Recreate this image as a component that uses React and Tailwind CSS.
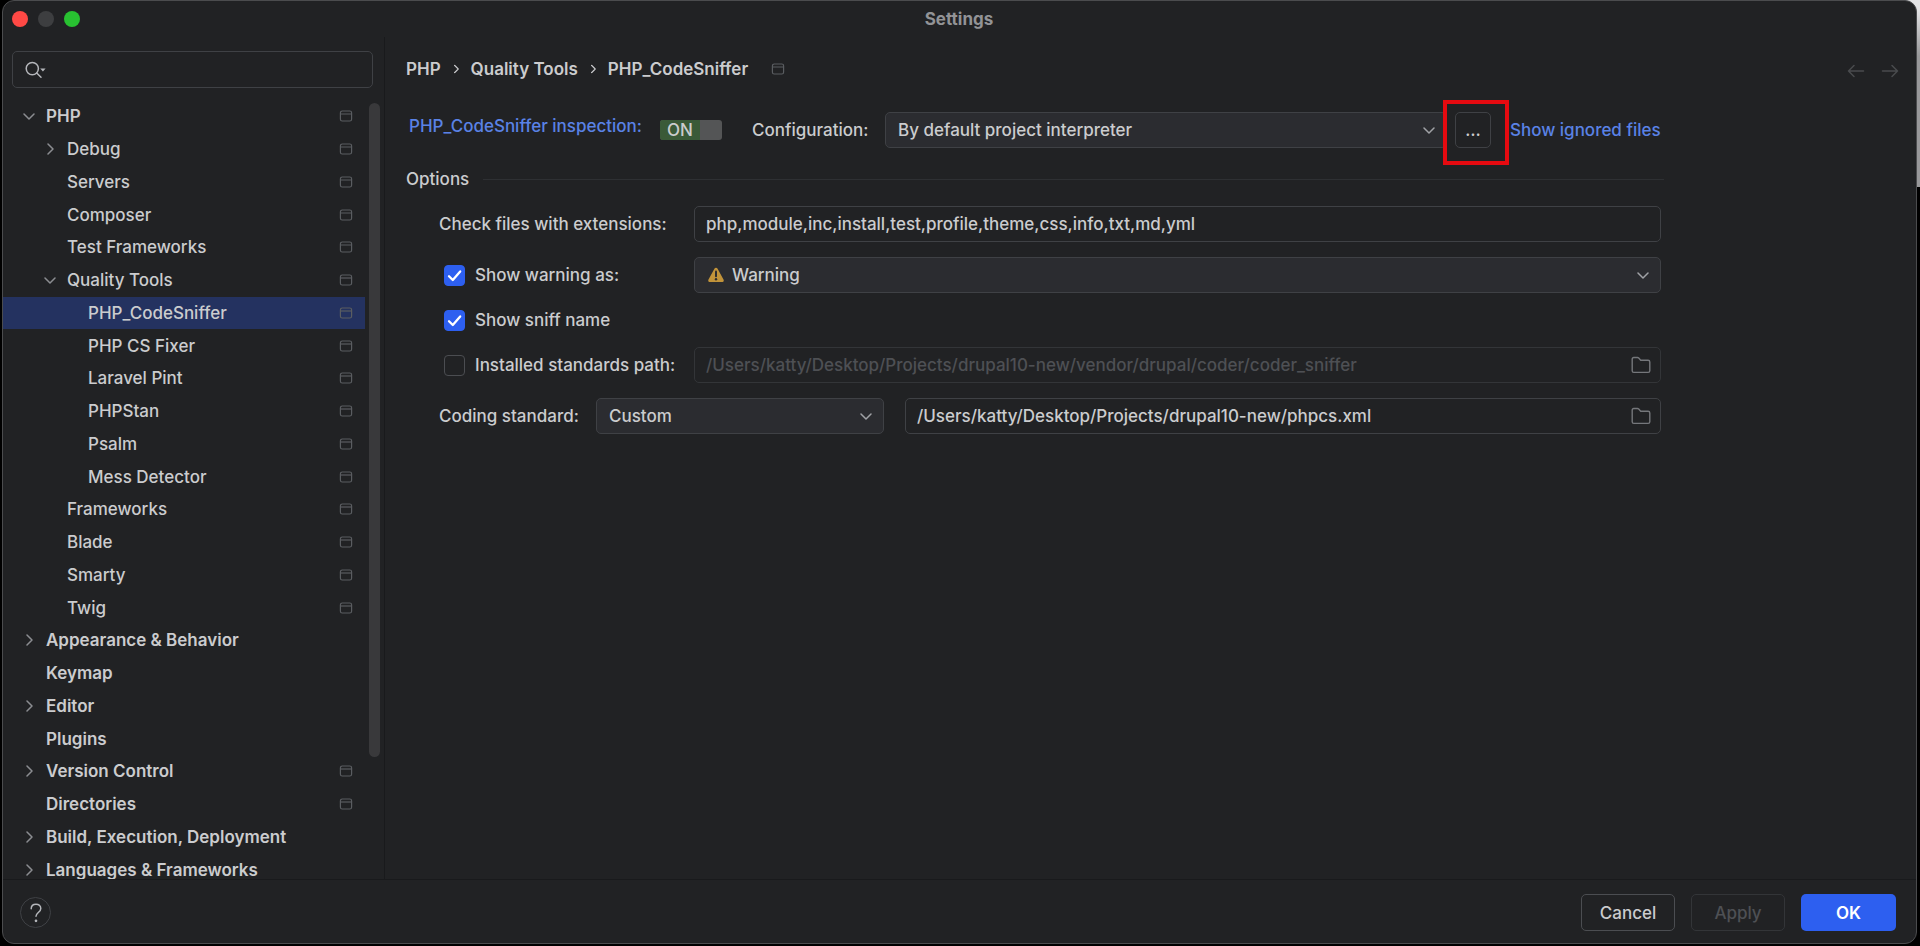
import { useState } from "react";

const TREE = [
  { label: "PHP", level: 0, arrow: "down", scope: true },
  { label: "Debug", level: 1, arrow: "right", scope: true },
  { label: "Servers", level: 1, scope: true },
  { label: "Composer", level: 1, scope: true },
  { label: "Test Frameworks", level: 1, scope: true },
  { label: "Quality Tools", level: 1, arrow: "down", scope: true },
  { label: "PHP_CodeSniffer", level: 2, scope: true },
  { label: "PHP CS Fixer", level: 2, scope: true },
  { label: "Laravel Pint", level: 2, scope: true },
  { label: "PHPStan", level: 2, scope: true },
  { label: "Psalm", level: 2, scope: true },
  { label: "Mess Detector", level: 2, scope: true },
  { label: "Frameworks", level: 1, scope: true },
  { label: "Blade", level: 1, scope: true },
  { label: "Smarty", level: 1, scope: true },
  { label: "Twig", level: 1, scope: true },
  { label: "Appearance & Behavior", level: 0, arrow: "right" },
  { label: "Keymap", level: 0 },
  { label: "Editor", level: 0, arrow: "right" },
  { label: "Plugins", level: 0 },
  { label: "Version Control", level: 0, arrow: "right", scope: true },
  { label: "Directories", level: 0, scope: true },
  { label: "Build, Execution, Deployment", level: 0, arrow: "right" },
  { label: "Languages & Frameworks", level: 0, arrow: "right" },
];

const INDENT = ["pl-5", "pl-[41px]", "pl-[62px]"];

function Chevron({ direction, className = "" }) {
  const d = direction === "right" ? "M4 1l5 5-5 5" : "M1 4l5 5 5-5";
  return (
    <svg viewBox="0 0 12 12" className={`size-3 shrink-0 ${className}`} fill="none" stroke="currentColor" strokeWidth="1.5" strokeLinecap="round" strokeLinejoin="round" aria-hidden="true">
      <path d={d} />
    </svg>
  );
}

function ScopeIcon() {
  return (
    <svg viewBox="0 0 14 12" className="h-3 w-3.5 shrink-0 text-[#5a5d61]" fill="none" stroke="currentColor" strokeWidth="1.2" aria-hidden="true">
      <rect x="1.4" y="1" width="11.2" height="10" rx="1.8" />
      <path d="M1.4 4h11.2" />
    </svg>
  );
}

function FolderIcon() {
  return (
    <svg viewBox="0 0 20 18" className="h-[18px] w-5" fill="none" stroke="currentColor" strokeWidth="1.4" strokeLinejoin="round" aria-hidden="true">
      <path d="M1.2 3.2c0-1 .6-1.700 1.600-1.700h3.700c.5 0 .9.2 1.200.5l2 2.200h7.400c1 0 1.700.7 1.700 1.700v8.800c0 1-.7 1.700-1.700 1.700H2.800c-1 0-1.600-.7-1.600-1.700z" />
    </svg>
  );
}

function Sidebar() {
  const [selected, setSelected] = useState("PHP_CodeSniffer");
  return (
    <aside className="flex w-[382px] shrink-0 flex-col border-r border-[#191a1c]">
      <div className="mt-3.5 mr-[11px] ml-[9px] flex h-[37px] shrink-0 items-center rounded-[5px] border border-[#3f4145] pl-3">
        <svg viewBox="0 0 21 18" className="h-[18px] w-[21px] shrink-0 text-[#b4b6ba]" fill="none" stroke="currentColor" strokeWidth="1.5" strokeLinecap="round" aria-hidden="true">
          <circle cx="7.3" cy="7.6" r="6.1" />
          <path d="M11.7 12l4.3 4.2" />
          <path d="M15.2 7.6h5.4l-2.7 2.8z" fill="currentColor" stroke="none" />
        </svg>
        <input aria-label="Search settings" className="h-full min-w-0 flex-1 bg-transparent px-2 outline-none" />
      </div>
      <div className="mt-3 flex min-h-0 flex-1 overflow-hidden">
        <ul role="tree" aria-label="Settings categories" className="mb-[-7px] flex min-w-0 flex-1 flex-col">
          {TREE.map((item) => (
            <li key={item.label} role="treeitem" aria-selected={item.label === selected} className="flex min-h-8 flex-1">
              <button
                type="button"
                onClick={() => setSelected(item.label)}
                className={`flex w-full items-center pr-3 text-left ${INDENT[item.level]} ${item.level === 0 ? "font-semibold" : ""} ${item.label === selected ? "bg-[#243260]" : ""}`}
              >
                <span className="mr-[11px] flex size-3 shrink-0 text-[#8b8d91]">{item.arrow && <Chevron direction={item.arrow} />}</span>
                <span className="flex-1 truncate">{item.label}</span>
                {item.scope && <ScopeIcon />}
              </button>
            </li>
          ))}
        </ul>
        <div className="mx-1 mt-[3px] h-[84%] w-[11px] shrink-0 rounded-full bg-[#39393b]" />
      </div>
    </aside>
  );
}

function Select({ id, label, value, className = "", icon = null }) {
  return (
    <div className={`relative ${className}`}>
      <select
        id={id}
        aria-label={label}
        className={`h-9 w-full appearance-none rounded-[5px] border border-[#3f4145] bg-[#2b2c30] pr-9 outline-none ${icon ? "pl-[37px]" : "pl-3"}`}
      >
        <option>{value}</option>
      </select>
      {icon && <span className="pointer-events-none absolute inset-y-0 left-3.5 flex items-center">{icon}</span>}
      <span className="pointer-events-none absolute inset-y-0 right-3 flex items-center text-[#a0a2a6]">
        <Chevron direction="down" />
      </span>
    </div>
  );
}

function PathField({ id, label, value, disabled = false, className = "" }) {
  return (
    <div className={`flex h-9 items-center rounded-[5px] border pr-[9px] pl-[11px] ${disabled ? "border-[#333538] text-[#4e5054]" : "border-[#3f4145]"} ${className}`}>
      <input id={id} aria-label={label} defaultValue={value} disabled={disabled} className="h-full min-w-0 flex-1 bg-transparent outline-none" />
      <button type="button" aria-label="Browse" disabled={disabled} className="text-[#75777b]">
        <FolderIcon />
      </button>
    </div>
  );
}

function Check({ id, label, checked = false }) {
  return (
    <div className="flex w-[250px] shrink-0 items-center pl-[5px]">
      <span className="relative flex size-[21px] shrink-0">
        <input
          id={id}
          type="checkbox"
          defaultChecked={checked}
          className="peer size-full appearance-none rounded-[4px] border border-[#4b4d51] checked:border-[#2d5ff0] checked:bg-[#2d5ff0]"
        />
        <svg viewBox="0 0 21 21" className="pointer-events-none absolute inset-0 hidden size-full peer-checked:block" fill="none" stroke="white" strokeWidth="2.3" strokeLinecap="round" strokeLinejoin="round" aria-hidden="true">
          <path d="M5 11.2l3.8 3.8L16.2 6.4" />
        </svg>
      </span>
      <label htmlFor={id} className="ml-2.5 whitespace-nowrap">{label}</label>
    </div>
  );
}

function WarningIcon() {
  return (
    <svg viewBox="0 0 16 16" className="size-4" aria-hidden="true">
      <path d="M8 .8c.7 0 1.3.4 1.6 1l5.9 10.6c.7 1.3-.1 2.7-1.5 2.700H2c-1.400 0-2.200-1.400-1.500-2.700L6.400 1.800c.3-.6.9-1 1.600-1z" fill="#c1933a" />
      <path d="M8 4.6v4.6" stroke="#2b2c30" strokeWidth="2" strokeLinecap="round" />
      <circle cx="8" cy="12.2" r="1.2" fill="#2b2c30" />
    </svg>
  );
}

function Toggle() {
  const [on, setOn] = useState(true);
  return (
    <button
      type="button"
      role="switch"
      aria-checked={on}
      aria-label="PHP_CodeSniffer inspection"
      onClick={() => setOn(!on)}
      className="flex h-5 w-[62px] overflow-hidden rounded-[3px] bg-[#545556] leading-5"
    >
      <span className={`h-full w-10 ${on ? "bg-[#3a5a38]" : "ml-auto bg-[#454647]"}`}>{on ? "ON" : "OFF"}</span>
    </button>
  );
}

function Content() {
  return (
    <main className="min-w-0 flex-1 pr-[17px] pl-[21px]">
      <div className="flex h-16 items-center justify-between">
        <nav aria-label="Breadcrumb" className="flex items-center font-semibold">
          <a href="#php">PHP</a>
          <Chevron direction="right" className="mx-[9px] scale-75" />
          <a href="#quality-tools">Quality Tools</a>
          <Chevron direction="right" className="mx-[9px] scale-75" />
          <span>PHP_CodeSniffer</span>
          <span className="ml-[23px]"><ScopeIcon /></span>
        </nav>
        <div className="mt-1 flex gap-4 text-[#494b4e]">
          <button type="button" aria-label="Back" disabled>
            <svg viewBox="0 0 18 14" className="h-3.5 w-[18px]" fill="none" stroke="currentColor" strokeWidth="1.5" strokeLinecap="round" strokeLinejoin="round"><path d="M16.5 7H1.5M7 1.5L1.5 7 7 12.5" /></svg>
          </button>
          <button type="button" aria-label="Forward" disabled>
            <svg viewBox="0 0 18 14" className="h-3.5 w-[18px]" fill="none" stroke="currentColor" strokeWidth="1.5" strokeLinecap="round" strokeLinejoin="round"><path d="M1.5 7h15M11 1.5L16.5 7 11 12.5" /></svg>
          </button>
        </div>
      </div>

      <div className="max-w-[1258px]">
        <div className="mt-[11px] flex h-9 items-center pl-[3px] whitespace-nowrap">
          <a href="#inspection" className="mb-2 w-[251px] shrink-0 text-[#5a82e6]">PHP_CodeSniffer inspection:</a>
          <Toggle />
          <label htmlFor="configuration" className="ml-[30px] w-[133px] shrink-0">Configuration:</label>
          <Select id="configuration" value="By default project interpreter" className="min-w-0 flex-1" />
          <div className="relative mr-[19px] ml-2">
            <button type="button" aria-label="Configure interpreters" className="flex size-9 items-center justify-center rounded-[5px] border border-[#3f4145]">…</button>
            <div className="pointer-events-none absolute -top-3 -right-[18px] -bottom-[17px] -left-3 border-4 border-[#e60a10]" />
          </div>
          <a href="#ignored" className="w-[154px] shrink-0 text-[#5a82e6]">Show ignored files</a>
        </div>

        <section className="mt-[19px]">
          <h2 className="flex items-center gap-3.5">
            Options
            <span className="h-px flex-1 bg-[#2e3033]" />
          </h2>
          <div className="mt-[15px] mr-[3px] flex flex-col gap-[15px] pl-[33px]">
            <div className="flex items-center">
              <label htmlFor="extensions" className="w-[255px] shrink-0">Check files with extensions:</label>
              <input
                id="extensions"
                defaultValue="php,module,inc,install,test,profile,theme,css,info,txt,md,yml"
                className="h-9 min-w-0 flex-1 rounded-[5px] border border-[#3f4145] bg-transparent px-[11px] outline-none"
              />
            </div>
            <div className="flex items-center">
              <Check id="show-warning" label="Show warning as:" checked />
              <Select label="Warning severity" value="Warning" icon={<WarningIcon />} className="ml-[5px] min-w-0 flex-1" />
            </div>
            <div className="flex h-6 items-center">
              <Check id="sniff-name" label="Show sniff name" checked />
            </div>
            <div className="flex items-center">
              <Check id="standards-path" label="Installed standards path:" />
              <PathField label="Installed standards path" value="/Users/katty/Desktop/Projects/drupal10-new/vendor/drupal/coder/coder_sniffer" disabled className="ml-[5px] min-w-0 flex-1" />
            </div>
            <div className="flex items-center">
              <label htmlFor="coding-standard" className="w-[157px] shrink-0">Coding standard:</label>
              <Select id="coding-standard" value="Custom" className="w-72" />
              <PathField label="Coding standard path" value="/Users/katty/Desktop/Projects/drupal10-new/phpcs.xml" className="ml-[21px] min-w-0 flex-1" />
            </div>
          </div>
        </section>
      </div>
    </main>
  );
}

export default function App() {
  return (
    <div className="relative flex h-screen overflow-hidden bg-black pr-[3px] pb-0.5 pl-0.5 font-['Inter',sans-serif] text-[17px] leading-6 font-medium text-[#cbccce]">
      <div className="absolute top-0 right-0 h-[187px] w-5 bg-linear-to-b from-[#e4e4e6] from-5% to-[#98989a] to-30%" />
      <div className="relative flex min-w-0 flex-1 flex-col overflow-hidden rounded-xl border border-[#4b4c4e] bg-[#212224]">
        <header className="grid h-9 shrink-0 grid-cols-[1fr_auto_1fr] items-center pr-2.5 pl-[9px]">
          <div className="flex gap-2.5">
            <button type="button" aria-label="Close" className="size-4 rounded-full bg-[#ff4945]" />
            <button type="button" aria-label="Minimize" className="size-4 rounded-full bg-[#3d3e40]" />
            <button type="button" aria-label="Zoom" className="size-4 rounded-full bg-[#28c131]" />
          </div>
          <h1 className="font-bold text-[#929396]">Settings</h1>
        </header>
        <div className="flex min-h-0 flex-1">
          <Sidebar />
          <Content />
        </div>
        <footer className="flex h-16 shrink-0 items-center gap-4 border-t border-[#191a1c] pt-0.5 pr-5 pl-[17px]">
          <button type="button" aria-label="Help" className="mr-auto flex size-[31px] items-center justify-center rounded-full border border-[#3f4145] text-[#b4b6ba]">
            <svg viewBox="0 0 12 20" className="h-5 w-3" fill="none" stroke="currentColor" strokeWidth="1.5" strokeLinecap="round" aria-hidden="true">
              <path d="M1.2 5.8C1.2 3 3.2 1.2 6 1.2s4.8 1.8 4.8 4.3c0 3.800-4.800 4.200-4.800 7.700" />
              <circle cx="6" cy="17.8" r=".6" fill="currentColor" />
            </svg>
          </button>
          <button type="button" className="h-[37px] w-[94px] rounded-[5px] border border-[#4b4d51]">Cancel</button>
          <button type="button" disabled className="h-[37px] w-[94px] rounded-[5px] border border-[#333538] text-[#4e5054]">Apply</button>
          <button type="button" className="h-[37px] w-[95px] rounded-[5px] bg-[#2d5ff0] font-semibold text-white">OK</button>
        </footer>
      </div>
    </div>
  );
}
